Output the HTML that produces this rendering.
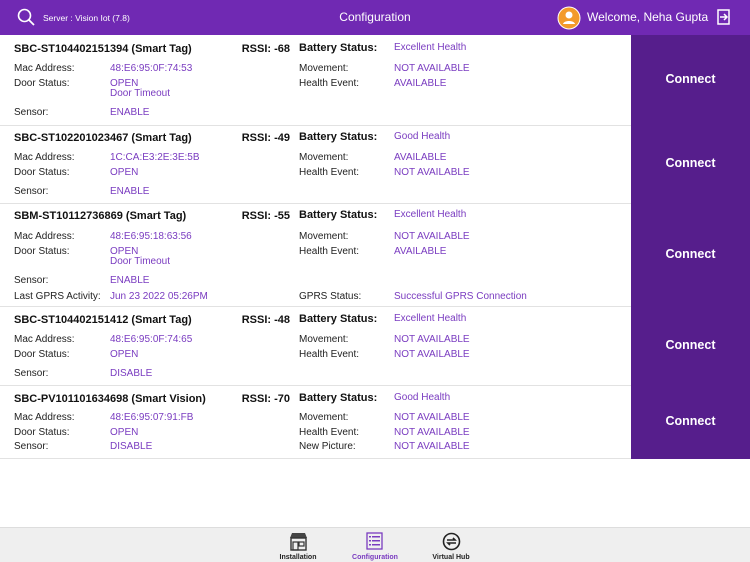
<!DOCTYPE html><html><head><style>
*{margin:0;padding:0;box-sizing:border-box}
body{width:750px;height:562px;position:relative;background:#fff;font-family:"Liberation Sans",sans-serif;overflow:hidden;font-size:10px;color:#222}
.hdr{position:absolute;left:0;top:0;width:750px;height:35px;background:#7029b3;color:#fff}
.t{position:absolute;line-height:14px;white-space:nowrap}
.b{font-weight:bold;font-size:11px;color:#111}
.p{color:#7a3cc0}
.conn{position:absolute;left:631px;top:35px;width:119px;height:424px;background:#561e8c}
.cw{position:absolute;left:631px;width:119px;text-align:center;color:#fff;font-weight:bold;font-size:12.5px;line-height:14px}
.sep{position:absolute;left:0;width:631px;height:1px;background:#e2e2e2}
.bot{position:absolute;left:0;top:527px;width:750px;height:35px;background:#efefef;border-top:1px solid #ddd}
.tab{position:absolute;top:26px;font-size:7px;font-weight:bold;width:70px;text-align:center;color:#222}
</style></head><body>
<div class="hdr">
<svg style="position:absolute;left:17px;top:8px" width="18" height="18" viewBox="0 0 18 18"><circle cx="7.5" cy="7.5" r="6" fill="none" stroke="#fff" stroke-width="1.6"/><line x1="12" y1="12" x2="17" y2="17" stroke="#fff" stroke-width="1.8"/></svg>
<div class="t" style="left:43px;top:11px;font-size:8.5px">Server : Vision Iot (7.8)</div>
<div class="t" style="left:0;width:750px;text-align:center;top:10px;font-size:12px">Configuration</div>
<svg style="position:absolute;left:557px;top:6px" width="24" height="24" viewBox="0 0 24 24"><circle cx="12" cy="12" r="11" fill="#f39a2a" stroke="#fff" stroke-width="1"/><circle cx="12" cy="9" r="3.5" fill="#fff"/><path d="M6 18c1-4 11-4 12 0z" fill="#fff"/></svg>
<div class="t" style="left:587px;top:10px;font-size:12px">Welcome, Neha Gupta</div>
<svg style="position:absolute;left:717px;top:9px" width="14" height="16" viewBox="0 0 14 16"><rect x="1" y="1" width="11" height="14" fill="none" stroke="#fff" stroke-width="1.5"/><path d="M3 8h6M7 5l3 3-3 3" fill="none" stroke="#fff" stroke-width="1.5"/></svg>
</div>
<div class="conn"></div>
<div class="cw" style="top:72px">Connect</div>
<div class="cw" style="top:156px">Connect</div>
<div class="cw" style="top:247px">Connect</div>
<div class="cw" style="top:338px">Connect</div>
<div class="cw" style="top:414px">Connect</div>
<div class="sep" style="top:125px"></div><div class="sep" style="top:203px"></div><div class="sep" style="top:306px"></div><div class="sep" style="top:385px"></div><div class="sep" style="top:458px"></div>

<div class="t b" style="left:14px;top:42px">SBC-ST104402151394 (Smart Tag)</div>
<div class="t b" style="left:220px;width:70px;text-align:right;top:42px">RSSI: -68</div>
<div class="t b" style="left:299px;top:41px">Battery Status:</div>
<div class="t p" style="left:394px;top:41px">Excellent Health</div>
<div class="t" style="left:14px;top:62px">Mac Address:</div><div class="t p" style="left:110px;top:62px">48:E6:95:0F:74:53</div>
<div class="t" style="left:299px;top:62px">Movement:</div><div class="t p" style="left:394px;top:62px">NOT AVAILABLE</div>
<div class="t" style="left:14px;top:77px">Door Status:</div><div class="t p" style="left:110px;top:77px">OPEN</div><div class="t p" style="left:110px;top:87px">Door Timeout</div>
<div class="t" style="left:299px;top:77px">Health Event:</div><div class="t p" style="left:394px;top:77px">AVAILABLE</div>
<div class="t" style="left:14px;top:106px">Sensor:</div><div class="t p" style="left:110px;top:106px">ENABLE</div>

<div class="t b" style="left:14px;top:131px">SBC-ST102201023467 (Smart Tag)</div>
<div class="t b" style="left:220px;width:70px;text-align:right;top:131px">RSSI: -49</div>
<div class="t b" style="left:299px;top:130px">Battery Status:</div>
<div class="t p" style="left:394px;top:130px">Good Health</div>
<div class="t" style="left:14px;top:151px">Mac Address:</div><div class="t p" style="left:110px;top:151px">1C:CA:E3:2E:3E:5B</div>
<div class="t" style="left:299px;top:151px">Movement:</div><div class="t p" style="left:394px;top:151px">AVAILABLE</div>
<div class="t" style="left:14px;top:166px">Door Status:</div><div class="t p" style="left:110px;top:166px">OPEN</div>
<div class="t" style="left:299px;top:166px">Health Event:</div><div class="t p" style="left:394px;top:166px">NOT AVAILABLE</div>
<div class="t" style="left:14px;top:185px">Sensor:</div><div class="t p" style="left:110px;top:185px">ENABLE</div>

<div class="t b" style="left:14px;top:209px">SBM-ST10112736869 (Smart Tag)</div>
<div class="t b" style="left:220px;width:70px;text-align:right;top:209px">RSSI: -55</div>
<div class="t b" style="left:299px;top:208px">Battery Status:</div>
<div class="t p" style="left:394px;top:208px">Excellent Health</div>
<div class="t" style="left:14px;top:230px">Mac Address:</div><div class="t p" style="left:110px;top:230px">48:E6:95:18:63:56</div>
<div class="t" style="left:299px;top:230px">Movement:</div><div class="t p" style="left:394px;top:230px">NOT AVAILABLE</div>
<div class="t" style="left:14px;top:245px">Door Status:</div><div class="t p" style="left:110px;top:245px">OPEN</div><div class="t p" style="left:110px;top:255px">Door Timeout</div>
<div class="t" style="left:299px;top:245px">Health Event:</div><div class="t p" style="left:394px;top:245px">AVAILABLE</div>
<div class="t" style="left:14px;top:274px">Sensor:</div><div class="t p" style="left:110px;top:274px">ENABLE</div>
<div class="t" style="left:14px;top:290px">Last GPRS Activity:</div><div class="t p" style="left:110px;top:290px">Jun 23 2022 05:26PM</div>
<div class="t" style="left:299px;top:290px">GPRS Status:</div><div class="t p" style="left:394px;top:290px">Successful GPRS Connection</div>

<div class="t b" style="left:14px;top:313px">SBC-ST104402151412 (Smart Tag)</div>
<div class="t b" style="left:220px;width:70px;text-align:right;top:313px">RSSI: -48</div>
<div class="t b" style="left:299px;top:312px">Battery Status:</div>
<div class="t p" style="left:394px;top:312px">Excellent Health</div>
<div class="t" style="left:14px;top:333px">Mac Address:</div><div class="t p" style="left:110px;top:333px">48:E6:95:0F:74:65</div>
<div class="t" style="left:299px;top:333px">Movement:</div><div class="t p" style="left:394px;top:333px">NOT AVAILABLE</div>
<div class="t" style="left:14px;top:348px">Door Status:</div><div class="t p" style="left:110px;top:348px">OPEN</div>
<div class="t" style="left:299px;top:348px">Health Event:</div><div class="t p" style="left:394px;top:348px">NOT AVAILABLE</div>
<div class="t" style="left:14px;top:367px">Sensor:</div><div class="t p" style="left:110px;top:367px">DISABLE</div>

<div class="t b" style="left:14px;top:392px">SBC-PV101101634698 (Smart Vision)</div>
<div class="t b" style="left:220px;width:70px;text-align:right;top:392px">RSSI: -70</div>
<div class="t b" style="left:299px;top:391px">Battery Status:</div>
<div class="t p" style="left:394px;top:391px">Good Health</div>
<div class="t" style="left:14px;top:411px">Mac Address:</div><div class="t p" style="left:110px;top:411px">48:E6:95:07:91:FB</div>
<div class="t" style="left:299px;top:411px">Movement:</div><div class="t p" style="left:394px;top:411px">NOT AVAILABLE</div>
<div class="t" style="left:14px;top:426px">Door Status:</div><div class="t p" style="left:110px;top:426px">OPEN</div>
<div class="t" style="left:299px;top:426px">Health Event:</div><div class="t p" style="left:394px;top:426px">NOT AVAILABLE</div>
<div class="t" style="left:14px;top:440px">Sensor:</div><div class="t p" style="left:110px;top:440px">DISABLE</div>
<div class="t" style="left:299px;top:440px">New Picture:</div><div class="t p" style="left:394px;top:440px">NOT AVAILABLE</div>

<div class="bot">
<svg style="position:absolute;left:289px;top:4px" width="19" height="19" viewBox="0 0 19 19"><path d="M3 1h13l2 5H1z" fill="#444"/><rect x="2" y="6" width="15" height="12" fill="none" stroke="#333" stroke-width="1.4"/><rect x="4" y="10" width="5" height="8" fill="none" stroke="#333" stroke-width="1.2"/><rect x="10" y="10" width="5" height="4" fill="none" stroke="#333" stroke-width="1.2"/></svg>
<div class="tab" style="left:263px">Installation</div>
<svg style="position:absolute;left:366px;top:4px" width="17" height="18" viewBox="0 0 17 18"><rect x="1" y="1" width="15" height="16" fill="none" stroke="#7a3cc0" stroke-width="1.3"/><g fill="#7a3cc0"><rect x="3" y="4" width="2" height="1.5"/><rect x="6" y="4" width="8" height="1.5"/><rect x="3" y="8" width="2" height="1.5"/><rect x="6" y="8" width="8" height="1.5"/><rect x="3" y="12" width="2" height="1.5"/><rect x="6" y="12" width="8" height="1.5"/></g></svg>
<div class="tab" style="left:340px;color:#7a3cc0">Configuration</div>
<svg style="position:absolute;left:442px;top:4px" width="19" height="19" viewBox="0 0 19 19"><circle cx="9.5" cy="9.5" r="8" fill="none" stroke="#222" stroke-width="1.6"/><path d="M5 8h8l-2-2M14 11H6l2 2" fill="none" stroke="#222" stroke-width="1.6"/></svg>
<div class="tab" style="left:416px">Virtual Hub</div>
</div>
</body></html>
